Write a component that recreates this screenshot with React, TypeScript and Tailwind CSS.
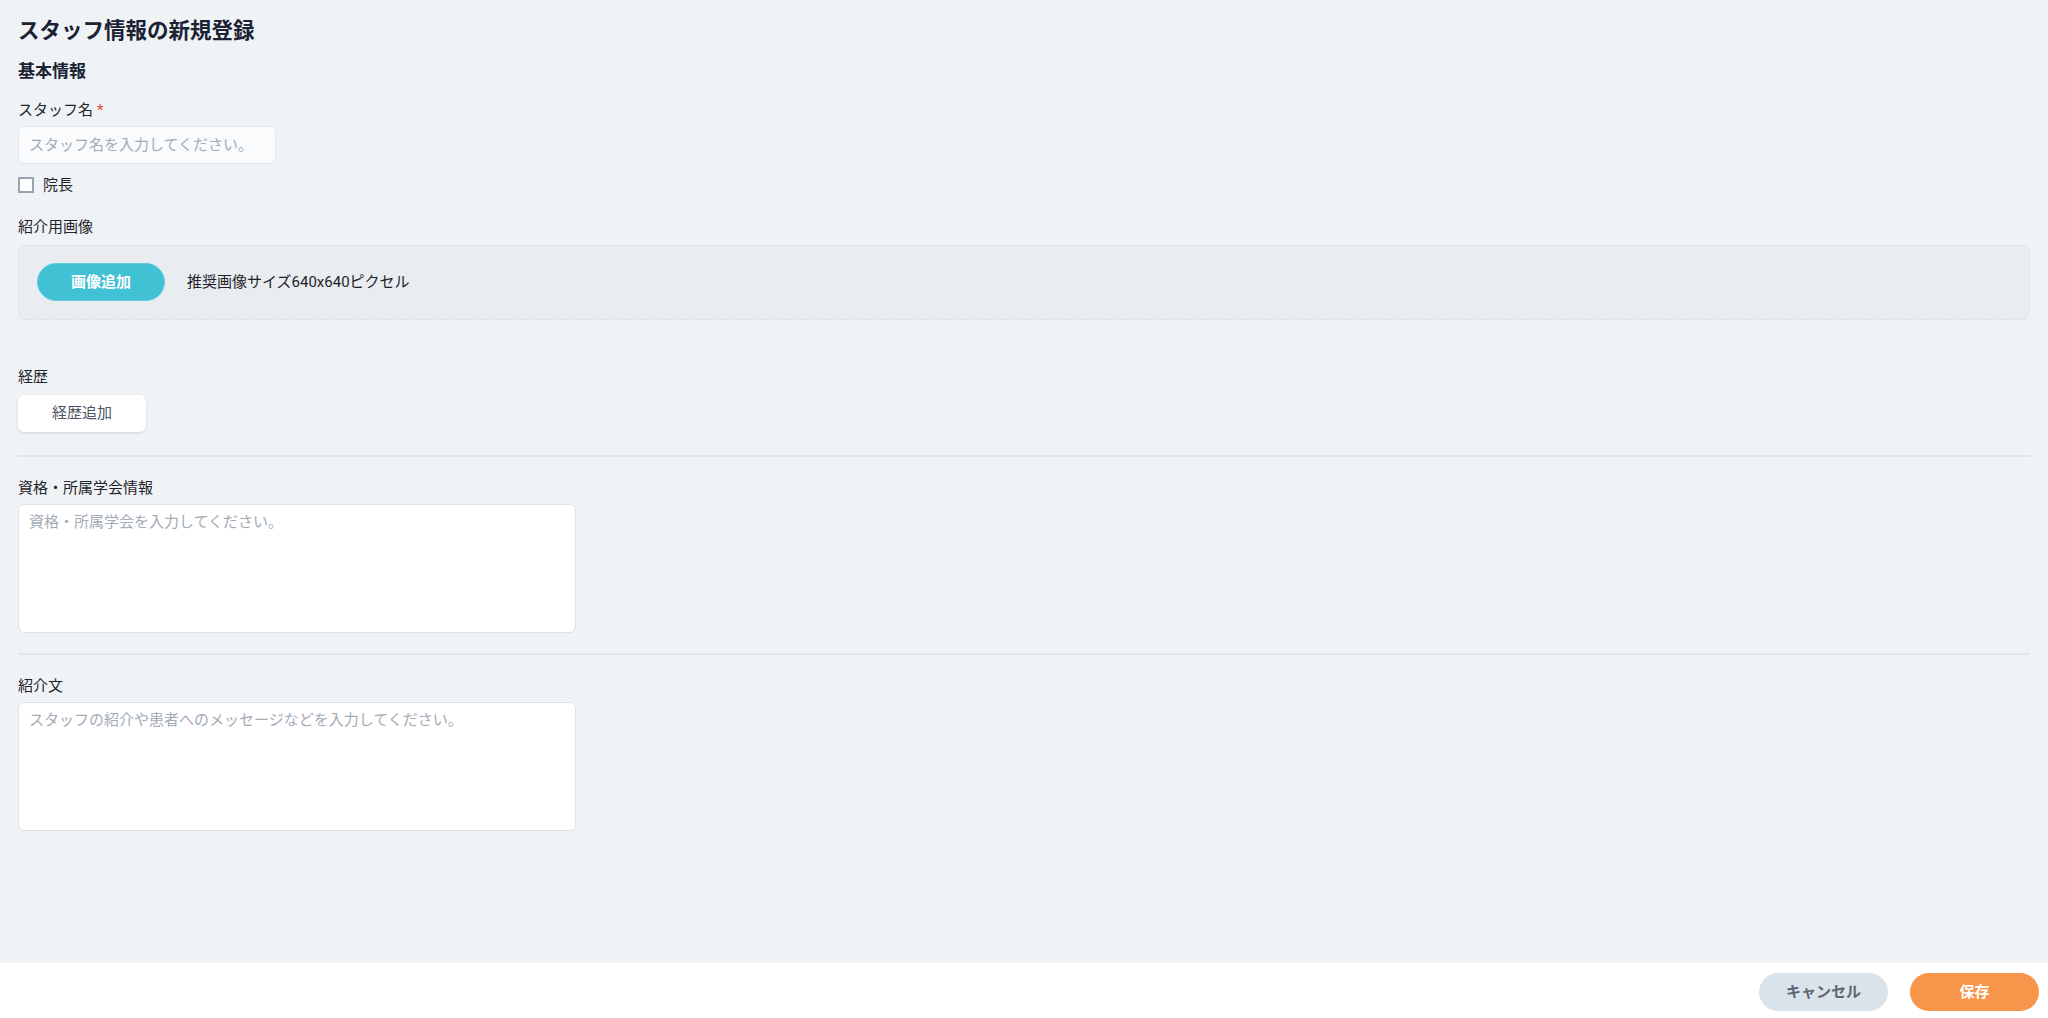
import React from "react";

const font = { fontFamily: 'Roboto, "Noto Sans CJK JP", sans-serif' };

function Label({ children, required }: { children: React.ReactNode; required?: boolean }) {
  return (
    <div className="flex h-5 items-center text-[15px] leading-5 text-[#1f2328]">
      <span>{children}</span>
      {required && <span className="ml-1 text-[#e53e3e]">*</span>}
    </div>
  );
}

function Divider() {
  return <div className="h-[2px] w-full bg-[#e1e5ea]" />;
}

export default function App() {
  return (
    <div className="flex h-[1018px] w-full flex-col bg-[#eff3f6]" style={font}>
      <div className="flex-1 px-[18px] pt-[17px]">
        <h1 className="text-[21.5px] font-bold leading-7 text-[#1a2233]">スタッフ情報の新規登録</h1>
        <h2 className="mt-[14px] text-[17px] font-bold leading-6 text-[#1a2233]">基本情報</h2>

        <div className="mt-[17px]">
          <Label required>スタッフ名</Label>
          <input
            className="mt-1.5 h-[38px] w-[258px] rounded-md border border-[#e3e8ee] bg-[#f9fbfc] px-[10px] text-[15px] text-[#1f2328] outline-none placeholder:text-[#a3abb6]"
            placeholder="スタッフ名を入力してください。"
          />
        </div>

        <label className="mt-[11px] flex h-5 items-center gap-[9px] text-[15px] text-[#1f2328]">
          <span className="h-4 w-4 border-2 border-[#9aa3ad] bg-white" />
          <span>院長</span>
        </label>

        <div className="mt-[22px]">
          <Label>紹介用画像</Label>
          <div className="mt-2 flex h-[75px] items-start rounded-lg border border-dashed border-[#dce1e7] bg-[#e9edf1] pl-[18px] pt-[17px]">
            <button className="h-[38px] w-[128px] rounded-full border border-[#5fcbdb] bg-[#41c1d4] text-[15px] font-bold text-white">
              画像追加
            </button>
            <span className="ml-[22px] mt-[9px] text-[15px] leading-5 text-[#1f2328]">推奨画像サイズ640x640ピクセル</span>
          </div>
        </div>

        <div className="mt-[47px]">
          <Label>経歴</Label>
          <button className="mt-2 h-[37px] w-[128px] rounded-md bg-white text-[15px] text-[#4b5563] shadow-[0_1px_3px_rgba(0,0,0,0.12)]">
            経歴追加
          </button>
        </div>

        <div className="mt-[23px]">
          <Divider />
        </div>

        <div className="mt-[21px]">
          <Label>資格・所属学会情報</Label>
          <textarea
            className="mt-1.5 block h-[129px] w-[558px] resize-none rounded-md border border-[#dde2e8] bg-white px-[10px] py-[7px] text-[15px] leading-5 outline-none placeholder:text-[#a3abb6]"
            placeholder="資格・所属学会を入力してください。"
          />
        </div>

        <div className="mt-[20px]">
          <Divider />
        </div>

        <div className="mt-[21px]">
          <Label>紹介文</Label>
          <textarea
            className="mt-1.5 block h-[129px] w-[558px] resize-none rounded-md border border-[#dde2e8] bg-white px-[10px] py-[7px] text-[15px] leading-5 outline-none placeholder:text-[#a3abb6]"
            placeholder="スタッフの紹介や患者へのメッセージなどを入力してください。"
          />
        </div>
      </div>

      <div className="flex h-[55px] items-start justify-end gap-[22px] bg-white pr-[9px] pt-[10px]">
        <button className="h-[38px] w-[129px] rounded-full bg-[#dbe3ea] text-[15px] font-bold text-[#5c6673]">
          キャンセル
        </button>
        <button className="h-[38px] w-[129px] rounded-full bg-[#f7954b] text-[15px] font-bold text-white">
          保存
        </button>
      </div>
    </div>
  );
}
